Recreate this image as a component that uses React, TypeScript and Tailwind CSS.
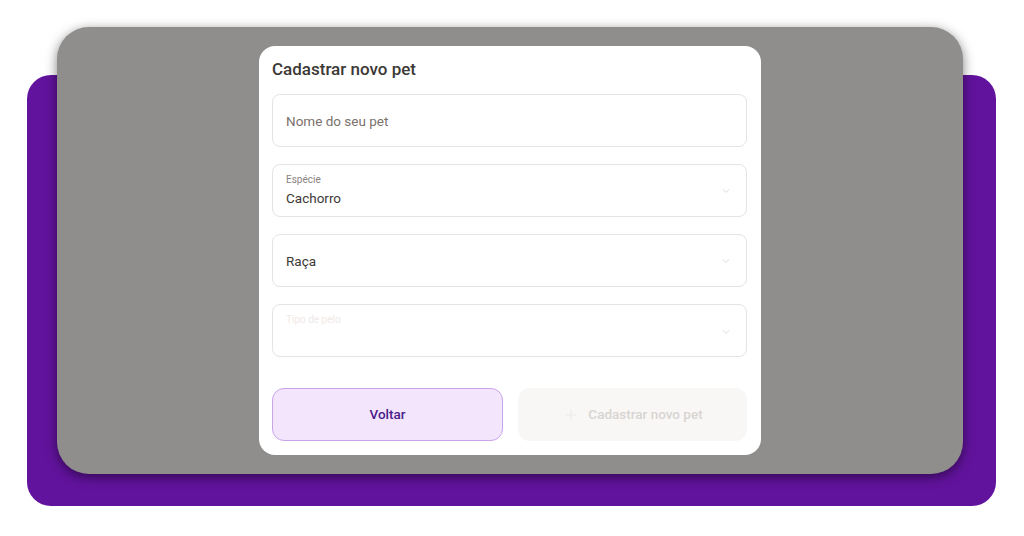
import React from 'react';
import { ChevronDown, Plus } from 'lucide-react';

function Field({ label, value, placeholder, faint }: { label?: string; value?: string; placeholder?: string; faint?: boolean }) {
  return (
    <div className="h-[53px] rounded-lg border border-[#e6e3e1] bg-white pl-[13px] pr-[14px] flex items-center justify-between">
      <div className="flex flex-col">
        {label && (
          <span className={`text-[10px] leading-[12px] ${faint ? 'text-[#efe9e6] -mt-[17px]' : 'text-[#8a8280] mb-[3px]'}`}>{label}</span>
        )}
        {value && <span className="text-[13.5px] leading-[18px] text-[#3d3a37]">{value}</span>}
        {placeholder && <span className="text-[13.5px] leading-[18px] text-[#7b716c]">{placeholder}</span>}
      </div>
      {(label || value === 'Raça') && <ChevronDown size={12} strokeWidth={1.5} className={`text-[#d4d0ce] ${faint ? 'mt-[3px]' : ''}`} />}
    </div>
  );
}

export default function App() {
  return (
    <div className="w-[1024px] h-[536px] bg-white pt-[75px] pl-[27px]" style={{ fontFamily: 'Roboto, "Noto Sans", sans-serif' }}>
      <div className="w-[969px] h-[431px] rounded-[24px] bg-[#62139d] flex flex-col">
        <div className="-mt-[48px] ml-[30px] w-[906px] h-[447px] rounded-[32px] bg-[#8f8e8d] shadow-[0_3px_12px_rgba(0,0,0,0.5)] pt-[19px]">
          <div className="mx-auto w-[502px] rounded-2xl bg-white pl-[13px] pr-[14px] pt-[11px] pb-[14px]">
            <h2 className="text-[17px] leading-[25px] font-medium text-[#3b3835]">Cadastrar novo pet</h2>
            <div className="mt-[12px] flex flex-col gap-[17px]">
              <Field placeholder="Nome do seu pet" />
              <Field label="Espécie" value="Cachorro" />
              <Field value="Raça" />
              <Field label="Tipo de pelo" faint />
            </div>
            <div className="mt-[31px] flex gap-[15px]">
              <button className="w-[231px] h-[53px] rounded-xl border border-[#c9a4ea] bg-[#f3e5fc] text-[13.5px] font-medium text-[#4d1c8a]">
                Voltar
              </button>
              <button className="flex-1 h-[53px] rounded-xl bg-[#f8f7f6] text-[13.5px] font-medium text-[#d8d4d1] flex items-center justify-center gap-[8px]">
                <Plus size={18} strokeWidth={1.25} className="text-[#ebe7e4]" />
                Cadastrar novo pet
              </button>
            </div>
          </div>
        </div>
      </div>
    </div>
  );
}
